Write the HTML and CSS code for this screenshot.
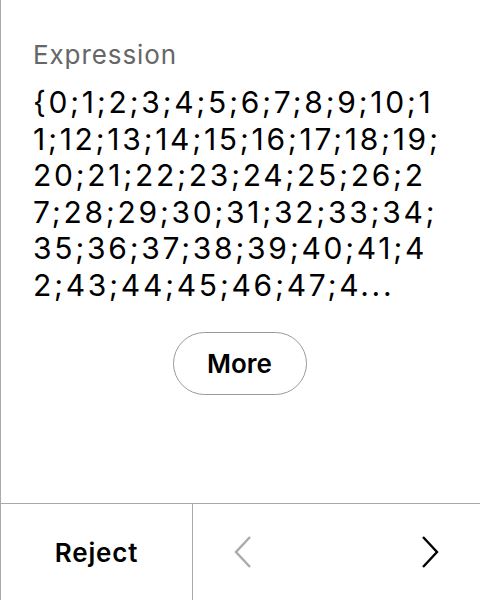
FILE: index.html
```html
<!DOCTYPE html>
<html>
<head>
<meta charset="utf-8">
<link rel="stylesheet" href="styles.css">
</head>
<body>
<div class="app">
  <main class="content">
    <div class="label">Expression</div>
    <div class="expr">{0;1;2;3;4;5;6;7;8;9;10;11;12;13;14;15;16;17;18;19;20;21;22;23;24;25;26;27;28;29;30;31;32;33;34;35;36;37;38;39;40;41;42;43;44;45;46;47;4...</div>
    <div class="more-wrap"><button class="more">More</button></div>
  </main>
  <footer class="footer">
    <button class="reject">Reject</button>
    <div class="nav">
      <svg class="chev prev" width="30" height="34" viewBox="0 0 30 34"><path d="M22 2 L8 17 L22 32" fill="none" stroke="currentColor" stroke-width="2.4"/></svg>
      <svg class="chev next" width="30" height="34" viewBox="0 0 30 34"><path d="M8 2 L22 17 L8 32" fill="none" stroke="currentColor" stroke-width="2.4"/></svg>
    </div>
  </footer>
</div>
</body>
</html>
```

FILE: styles.css
```css
html, body {
  margin: 0;
  padding: 0;
  background: #fff;
}
body {
  font-family: Inter, "Noto Sans", sans-serif;
  color: #000;
}
.app {
  width: 480px;
  height: 600px;
  box-sizing: border-box;
  border-left: 1px solid #aaa;
  display: flex;
  flex-direction: column;
}
.content {
  flex: 1;
  padding: 39px 34px 0 32px;
}
.label {
  font-size: 26px;
  line-height: 32px;
  letter-spacing: 0.9px;
  color: #666;
}
.expr {
  margin-top: 13px;
  font-size: 30px;
  line-height: 36.6px;
  letter-spacing: 2.7px;
  word-break: break-all;
}
.more-wrap {
  display: flex;
  justify-content: center;
  margin-top: 28px;
}
.more {
  width: 134px;
  height: 63px;
  border: 1.5px solid #999;
  border-radius: 32px;
  background: #fff;
  font-family: Inter, sans-serif;
  font-size: 26px;
  font-weight: 600;
  color: #000;
  padding: 0;
}
.footer {
  height: 96px;
  border-top: 1px solid #aaa;
  display: flex;
}
.reject {
  width: 192px;
  border: none;
  border-right: 1px solid #aaa;
  background: #fff;
  font-family: Inter, sans-serif;
  font-size: 26px;
  font-weight: 600;
  letter-spacing: 0.8px;
  color: #000;
  padding: 0;
}
.nav {
  flex: 1;
  display: flex;
  align-items: center;
  justify-content: space-between;
  padding: 0 35px;
}
.chev.prev { color: #aaa; }
.chev.next { color: #000; }
```
